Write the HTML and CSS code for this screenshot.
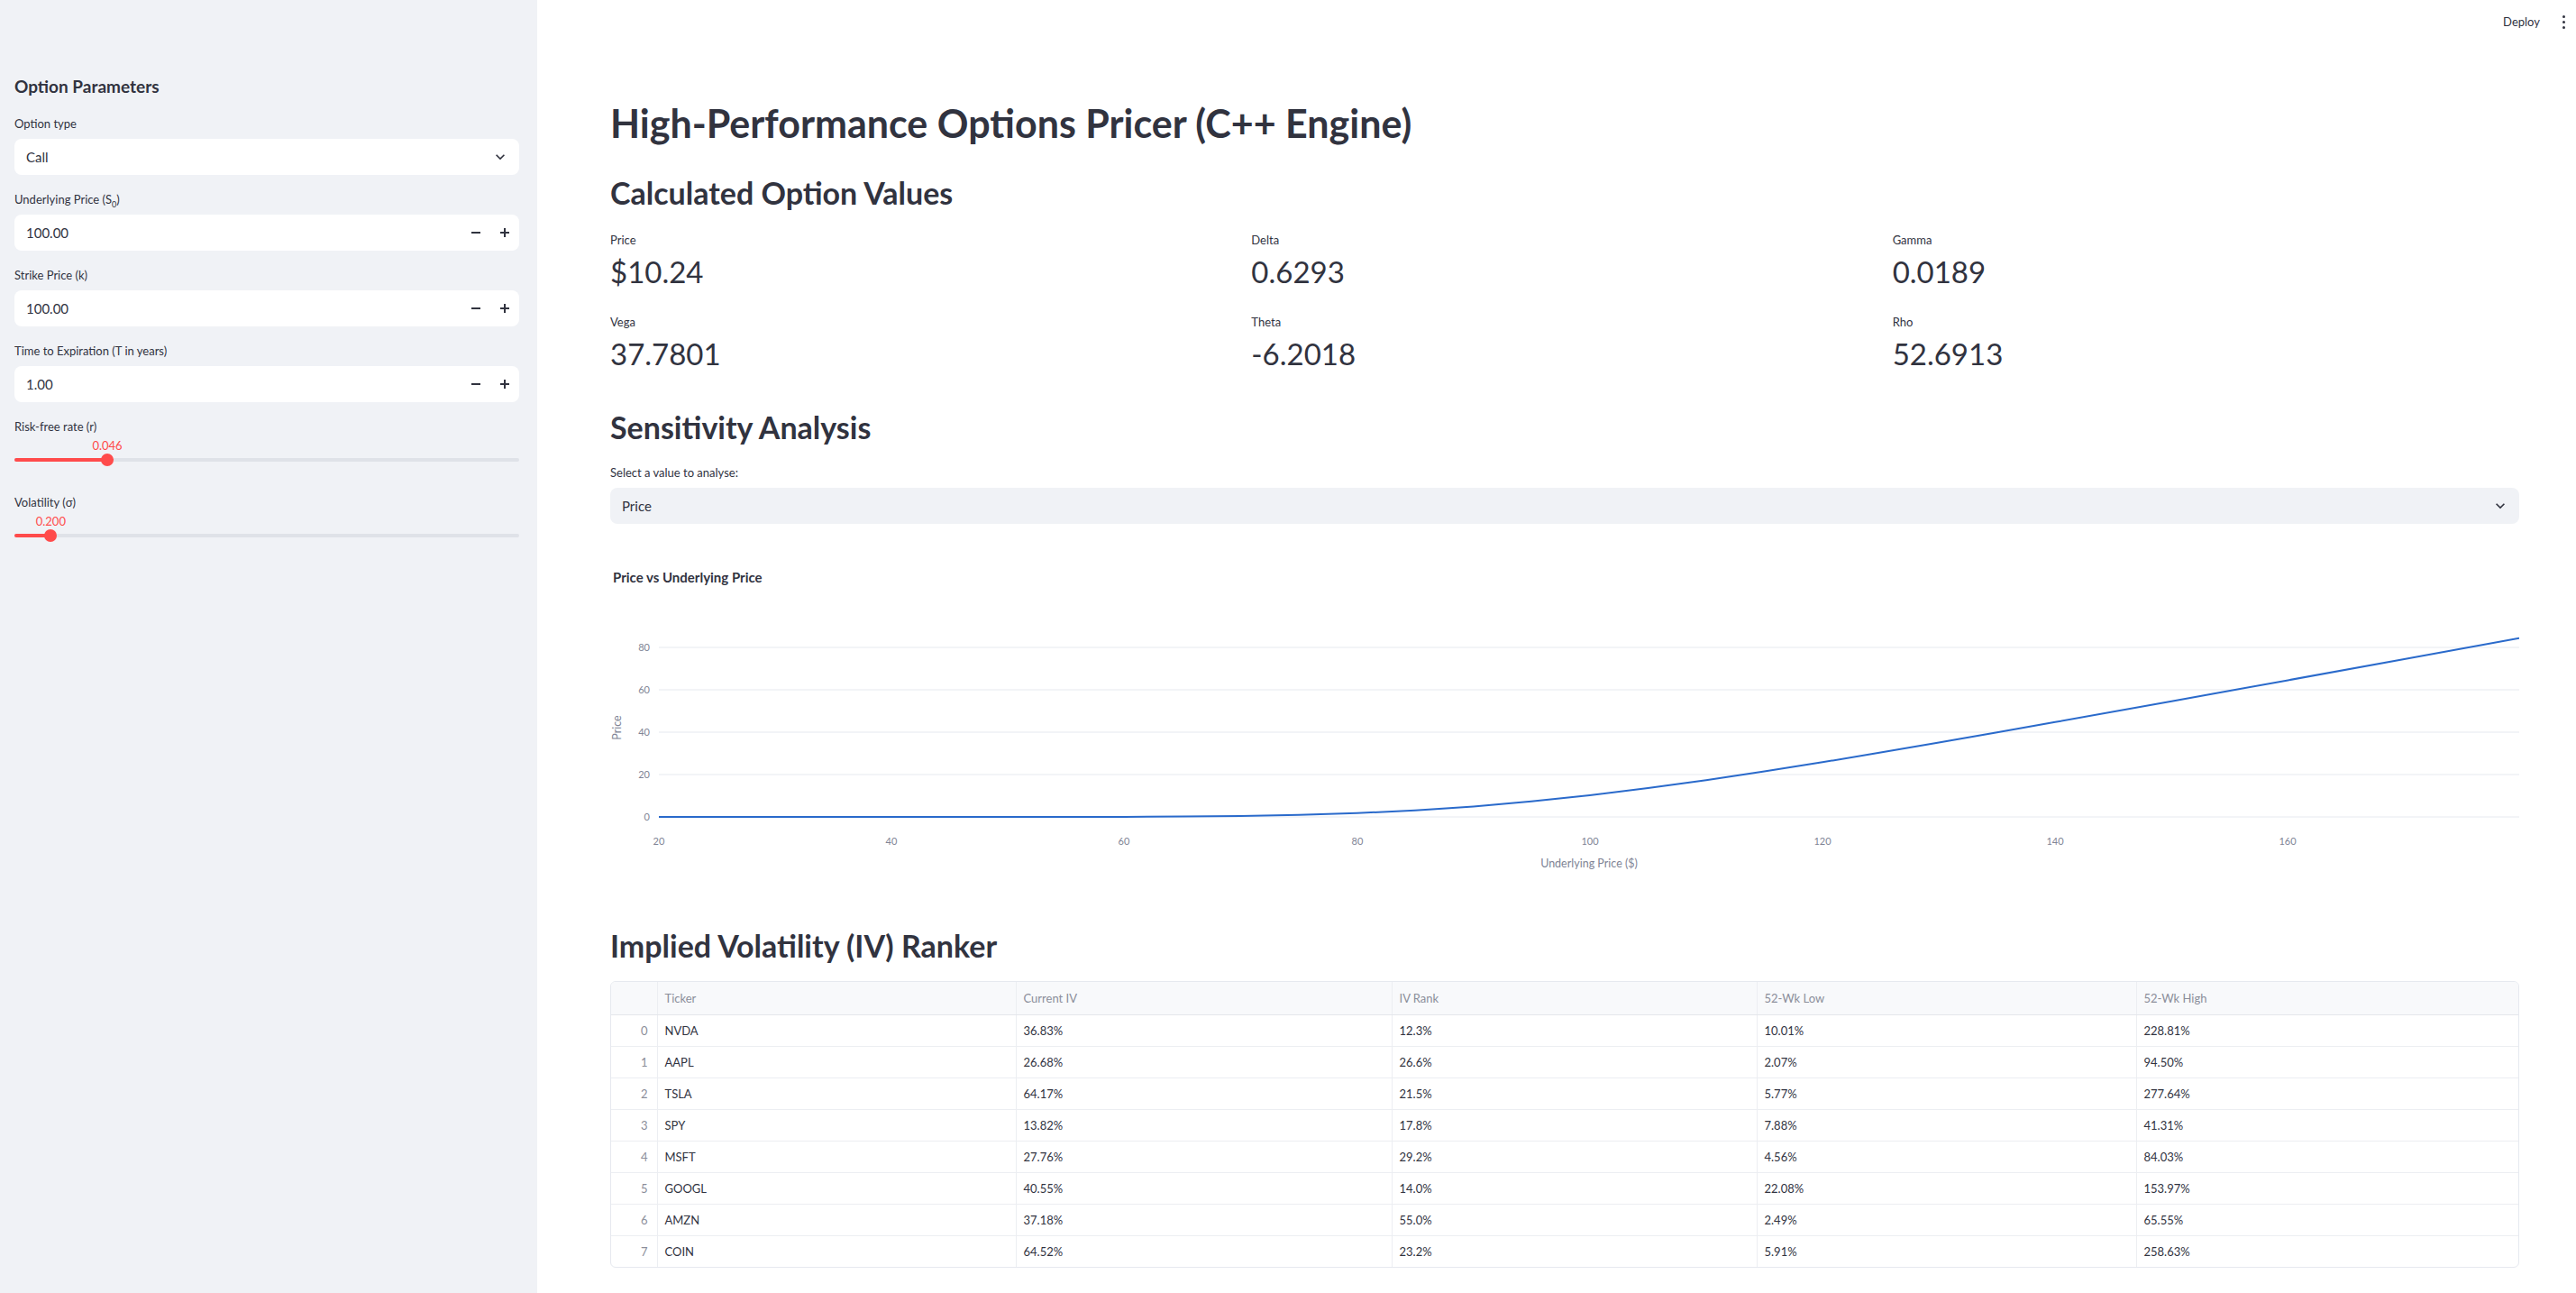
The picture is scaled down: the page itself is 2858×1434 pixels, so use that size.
FILE: index.html
```html
<!DOCTYPE html>
<html lang="en">
<head>
<meta charset="utf-8">
<title>High-Performance Options Pricer</title>
<link rel="stylesheet" href="styles.css">
</head>
<body>
<div class="app">
  <aside class="sidebar">
    <h2 class="side-title">Option Parameters</h2>
    <div class="widgets">
      <div class="widget">
        <div class="wlabel">Option type</div>
        <div class="field select"><span>Call</span><svg class="chev" viewBox="0 0 24 24"><path d="M16.59 8.59L12 13.17 7.41 8.59 6 10l6 6 6-6z"/></svg></div>
      </div>
      <div class="widget">
        <div class="wlabel">Underlying Price (S<sub>0</sub>)</div>
        <div class="field num"><span>100.00</span><span class="steps"><span class="step"><svg viewBox="0 0 12 12"><rect x="1" y="5" width="10" height="2"/></svg></span><span class="step"><svg viewBox="0 0 12 12"><rect x="1" y="5" width="10" height="2"/><rect x="5" y="1" width="2" height="10"/></svg></span></span></div>
      </div>
      <div class="widget">
        <div class="wlabel">Strike Price (k)</div>
        <div class="field num"><span>100.00</span><span class="steps"><span class="step"><svg viewBox="0 0 12 12"><rect x="1" y="5" width="10" height="2"/></svg></span><span class="step"><svg viewBox="0 0 12 12"><rect x="1" y="5" width="10" height="2"/><rect x="5" y="1" width="2" height="10"/></svg></span></span></div>
      </div>
      <div class="widget">
        <div class="wlabel">Time to Expiration (T in years)</div>
        <div class="field num"><span>1.00</span><span class="steps"><span class="step"><svg viewBox="0 0 12 12"><rect x="1" y="5" width="10" height="2"/></svg></span><span class="step"><svg viewBox="0 0 12 12"><rect x="1" y="5" width="10" height="2"/><rect x="5" y="1" width="2" height="10"/></svg></span></span></div>
      </div>
      <div class="widget slider-w">
        <div class="wlabel">Risk-free rate (r)</div>
        <div class="slider">
          <div class="track">
            <div class="fill" style="width:18.4%"></div>
            <div class="thumb" style="left:18.4%"><span class="val">0.046</span></div>
          </div>
        </div>
      </div>
      <div class="widget slider-w">
        <div class="wlabel">Volatility (σ)</div>
        <div class="slider">
          <div class="track">
            <div class="fill" style="width:7.2%"></div>
            <div class="thumb" style="left:7.2%"><span class="val">0.200</span></div>
          </div>
        </div>
      </div>
    </div>
  </aside>

  <main class="main">
    <header class="topbar">
      <span class="deploy">Deploy</span>
      <span class="kebab"><i></i><i></i><i></i></span>
    </header>
    <div class="content">
      <h1 class="title">High-Performance Options Pricer (C++ Engine)</h1>
      <h2 class="h2 first">Calculated Option Values</h2>
      <div class="metrics">
        <div class="metric"><div class="m-label">Price</div><div class="m-value">$10.24</div></div>
        <div class="metric"><div class="m-label">Delta</div><div class="m-value">0.6293</div></div>
        <div class="metric"><div class="m-label">Gamma</div><div class="m-value">0.0189</div></div>
        <div class="metric"><div class="m-label">Vega</div><div class="m-value">37.7801</div></div>
        <div class="metric"><div class="m-label">Theta</div><div class="m-value">-6.2018</div></div>
        <div class="metric"><div class="m-label">Rho</div><div class="m-value">52.6913</div></div>
      </div>

      <h2 class="h2 sens">Sensitivity Analysis</h2>
      <div class="wlabel main-label">Select a value to analyse:</div>
      <div class="field select grey"><span>Price</span><svg class="chev" viewBox="0 0 24 24"><path d="M16.59 8.59L12 13.170 7.41 8.59 6 10l6 6 6-6z"/></svg></div>

      <svg class="chart" viewBox="0 0 2118 360" width="2118" height="360">
        <text class="c-title" x="3" y="26">Price vs Underlying Price</text>
        <g class="grid">
          <line x1="54" y1="98" x2="2118" y2="98"/>
          <line x1="54" y1="145" x2="2118" y2="145"/>
          <line x1="54" y1="192" x2="2118" y2="192"/>
          <line x1="54" y1="239" x2="2118" y2="239"/>
          <line x1="54" y1="286" x2="2118" y2="286"/>
        </g>
        <g class="ytick">
          <text x="44" y="102">80</text>
          <text x="44" y="149">60</text>
          <text x="44" y="196">40</text>
          <text x="44" y="243">20</text>
          <text x="44" y="290">0</text>
        </g>
        <g class="xtick">
          <text x="54" y="317">20</text>
          <text x="312" y="317">40</text>
          <text x="570" y="317">60</text>
          <text x="829" y="317">80</text>
          <text x="1087" y="317">100</text>
          <text x="1345" y="317">120</text>
          <text x="1603" y="317">140</text>
          <text x="1861" y="317">160</text>
        </g>
        <text class="axis-title" x="1086" y="342">Underlying Price ($)</text>
        <text class="axis-title" transform="translate(12 187) rotate(-90)" x="0" y="0">Price</text>
        <path class="line" d="M54 286 L441 286 L570 285.9 L635 285.6 L699.5 285 L764 283.8 L828.6 281.8 L893 278.7 L957.7 274.4 L1022 268.8 L1086.8 261.9 L1151.4 254 L1215.9 245.2 L1280.5 235.5 L1345 225.3 L1409.6 214.6 L1474.1 203.6 L1538.7 192.3 L1603.2 180.8 L1732.3 157.7 L1861.4 134.4 L1990.5 110.9 L2118 87.7"/>
      </svg>

      <h2 class="h2 iv">Implied Volatility (IV) Ranker</h2>
      <div class="table-wrap">
        <table class="grid-table">
          <colgroup>
            <col style="width:51px"><col style="width:398px"><col style="width:417px"><col style="width:405px"><col style="width:421px"><col>
          </colgroup>
          <thead>
            <tr><th></th><th>Ticker</th><th>Current IV</th><th>IV Rank</th><th>52-Wk Low</th><th>52-Wk High</th></tr>
          </thead>
          <tbody>
            <tr><td class="idx">0</td><td>NVDA</td><td>36.83%</td><td>12.3%</td><td>10.01%</td><td>228.81%</td></tr>
            <tr><td class="idx">1</td><td>AAPL</td><td>26.68%</td><td>26.6%</td><td>2.07%</td><td>94.50%</td></tr>
            <tr><td class="idx">2</td><td>TSLA</td><td>64.17%</td><td>21.5%</td><td>5.77%</td><td>277.64%</td></tr>
            <tr><td class="idx">3</td><td>SPY</td><td>13.82%</td><td>17.8%</td><td>7.88%</td><td>41.31%</td></tr>
            <tr><td class="idx">4</td><td>MSFT</td><td>27.76%</td><td>29.2%</td><td>4.56%</td><td>84.03%</td></tr>
            <tr><td class="idx">5</td><td>GOOGL</td><td>40.55%</td><td>14.0%</td><td>22.08%</td><td>153.97%</td></tr>
            <tr><td class="idx">6</td><td>AMZN</td><td>37.18%</td><td>55.0%</td><td>2.49%</td><td>65.55%</td></tr>
            <tr><td class="idx">7</td><td>COIN</td><td>64.52%</td><td>23.2%</td><td>5.91%</td><td>258.63%</td></tr>
          </tbody>
        </table>
      </div>
    </div>
  </main>
</div>
</body>
</html>
```

FILE: styles.css
```css
* { box-sizing: border-box; }
html, body { margin: 0; padding: 0; }
body {
  font-family: "Lato", "Noto Sans", sans-serif;
  color: #31333f;
  background: #ffffff;
}
.app {
  display: flex;
  width: 2858px;
  height: 1434px;
  overflow: hidden;
}

/* Sidebar */
.sidebar {
  width: 596px;
  flex: none;
  background: #f0f2f6;
  padding: 84px 20px 0 16px;
}
.side-title {
  margin: 0 0 19px;
  font-size: 19px;
  line-height: 24px;
  font-weight: 700;
}
.widgets {
  display: flex;
  flex-direction: column;
  gap: 17px;
}
.wlabel {
  font-size: 13px;
  line-height: 20px;
  margin-bottom: 7px;
}
.wlabel sub { font-size: 9px; line-height: 0; }
.field {
  height: 40px;
  border-radius: 8px;
  background: #ffffff;
  display: flex;
  align-items: center;
  padding-left: 13px;
  font-size: 15px;
}
.select { justify-content: space-between; padding-right: 11px; }
.chev { width: 20px; height: 20px; fill: #31333f; }
.num { justify-content: space-between; }
.steps { display: flex; }
.step {
  width: 32px;
  height: 40px;
  display: flex;
  align-items: center;
  justify-content: center;
}
.step svg { width: 12px; height: 12px; fill: #31333f; }

.slider-w .wlabel { margin-bottom: 0; }
.slider { height: 47px; padding-top: 25px; }
.track {
  position: relative;
  height: 4px;
  border-radius: 2px;
  background: #dfe2e8;
}
.fill {
  height: 4px;
  border-radius: 2px;
  background: #ff4b4b;
}
.thumb {
  position: absolute;
  top: 50%;
  width: 14px;
  height: 14px;
  margin: -7px 0 0 -7px;
  border-radius: 50%;
  background: #ff4b4b;
}
.val {
  position: absolute;
  left: 50%;
  bottom: 15px;
  transform: translateX(-50%);
  color: #ff4b4b;
  font-size: 13px;
  line-height: 16px;
  white-space: nowrap;
}

/* Main */
.main {
  flex: 1;
  display: flex;
  flex-direction: column;
  min-width: 0;
}
.topbar {
  height: 48px;
  flex: none;
  display: flex;
  justify-content: flex-end;
  align-items: center;
  padding-right: 12px;
}
.deploy { font-size: 13px; margin-right: 25px; }
.kebab {
  display: flex;
  flex-direction: column;
  gap: 3px;
}
.kebab i {
  display: block;
  width: 3px;
  height: 3px;
  border-radius: 50%;
  background: #31333f;
}
.content {
  padding: 63px 63px 0 81px;
}
.title {
  margin: 0;
  font-size: 43px;
  line-height: 52px;
  font-weight: 700;
}
.h2 {
  margin: 0;
  font-size: 34px;
  line-height: 44px;
  font-weight: 700;
}
.h2.first { margin-top: 29px; }
.metrics {
  display: grid;
  grid-template-columns: repeat(3, 1fr);
  column-gap: 16px;
  row-gap: 24px;
  margin-top: 20px;
}
.m-label { font-size: 13px; line-height: 20px; }
.m-value { font-size: 33px; line-height: 44px; margin-top: 3px; }
.h2.sens { margin-top: 38px; }
.main-label { margin-top: 18px; }
.grey { background: #f0f2f6; }

.chart { display: block; margin-top: 39px; }
.c-title { font-size: 15px; font-weight: 700; fill: #31333f; }
.grid line { stroke: #e6e9ef; stroke-width: 1; }
.ytick text { font-size: 11px; fill: #808495; text-anchor: end; }
.xtick text { font-size: 11px; fill: #808495; text-anchor: middle; }
.axis-title { font-size: 12.5px; fill: #808495; text-anchor: middle; }
.line { fill: none; stroke: #2a6acb; stroke-width: 2; stroke-linejoin: round; }

.h2.iv { margin-top: 47px; }
.table-wrap {
  margin-top: 17px;
  border: 1px solid #e6e9ef;
  border-radius: 6px;
  overflow: hidden;
}
.grid-table {
  width: 100%;
  border-collapse: collapse;
  table-layout: fixed;
  font-size: 13px;
}
.grid-table th, .grid-table td {
  text-align: left;
  padding: 0 8px;
  border-right: 1px solid #eceef2;
  border-bottom: 1px solid #eceef2;
  white-space: nowrap;
}
.grid-table th:last-child, .grid-table td:last-child { border-right: none; }
.grid-table tbody tr:last-child td { border-bottom: none; }
.grid-table th {
  height: 36px;
  background: #f8f9fb;
  color: #8b8e9a;
  font-weight: 400;
  border-bottom-color: #e4e6eb;
}
.grid-table td { height: 35px; }
.grid-table td.idx { text-align: right; color: #8b8e9a; padding-right: 10px; }
```
